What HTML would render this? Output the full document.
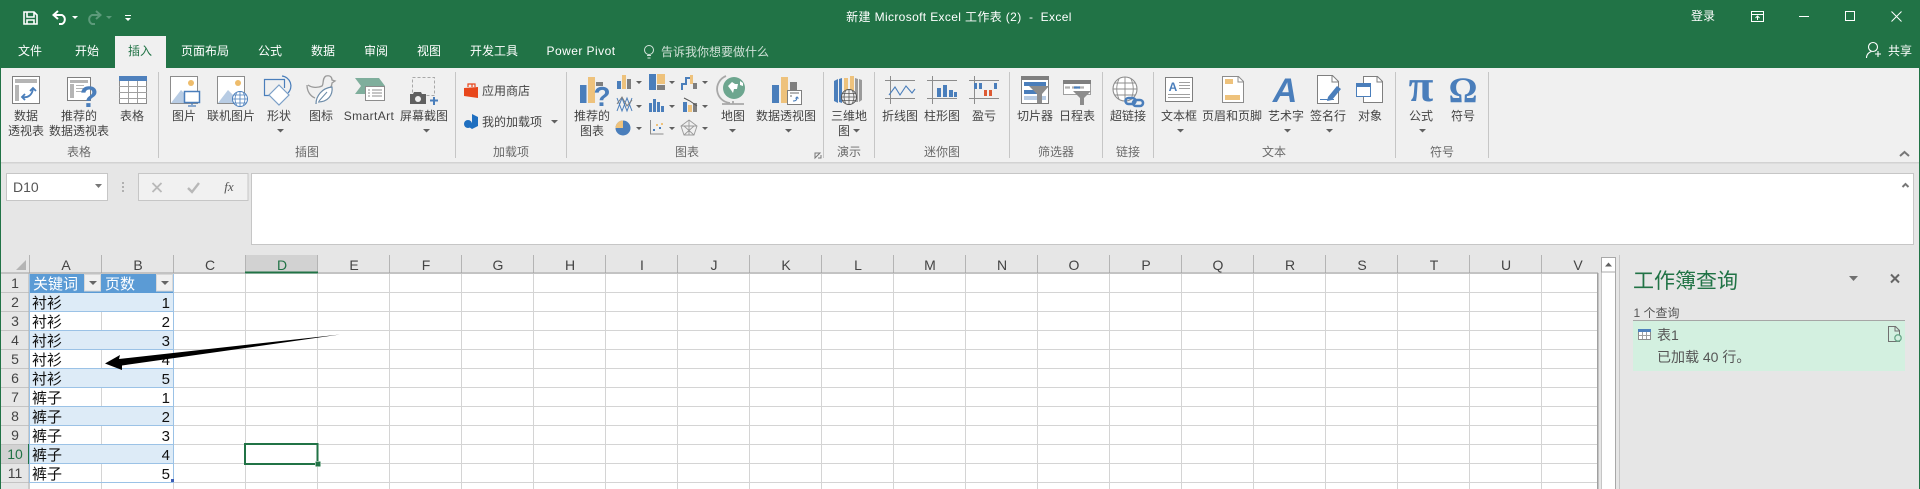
<!DOCTYPE html>
<html lang="zh-CN"><head><meta charset="utf-8"><title>新建 Microsoft Excel 工作表 (2) - Excel</title>
<style>
html,body{margin:0;padding:0;width:1920px;height:489px;overflow:hidden;background:#e6e6e6}
svg{display:block;font-family:"Liberation Sans","Noto Sans CJK SC",sans-serif}
.l{font-size:12px;fill:#444;text-anchor:middle}
.g{font-size:12px;fill:#6a6a6a;text-anchor:middle}
.s{font-size:12px;fill:#444}
.tab{font-size:12px;fill:#fff;text-anchor:middle}
.c{font-size:14px;fill:#444;text-anchor:middle}
.r{font-size:14px;fill:#444;text-anchor:middle}
.k{font-size:15px;fill:#111}
.n{font-size:15px;fill:#111;text-anchor:end}
.sep{stroke:#c6c6c6;stroke-width:1}
.dr{fill:#606060}
</style></head><body>
<svg width="1920" height="489" viewBox="0 0 1920 489" xmlns="http://www.w3.org/2000/svg">
<defs>
<pattern id="grid" x="30" y="274" width="72" height="19" patternUnits="userSpaceOnUse">
<rect x="71" y="0" width="1" height="19" fill="#d4d4d4"/><rect x="0" y="18" width="72" height="1" fill="#d4d4d4"/>
</pattern>
</defs>
<rect width="1920" height="489" fill="#e6e6e6"/>
<!-- title/tab bar -->
<rect width="1920" height="68" fill="#217346"/>
<rect x="0" y="68" width="1" height="421" fill="#217346"/>
<rect x="1919" y="68" width="1" height="421" fill="#217346"/>
<!-- QAT -->
<g fill="none" stroke="#fff" stroke-width="1.6">
<path d="M24 12h10l3 3v9H24z"/><path d="M27 12v5h7v-5" /><path d="M27 24v-4h7v4"/>
<path d="M54 15h8a5 5 0 0 1 0 9h-3" stroke-width="2"/><path d="M58 11l-4.500 4 4.500 4" stroke-width="2"/>
<g stroke="#5c9a7a"><path d="M100 15h-8a5 5 0 0 0 0 9h3" stroke-width="2"/><path d="M96 11l4.500 4-4.500 4" stroke-width="2"/></g>
</g>
<path d="M72 16h6l-3 3z" fill="#fff"/><path d="M106 16h6l-3 3z" fill="#5c9a7a"/>
<path d="M125 15h6v1h-6z M125 18h6l-3 3z" fill="#fff"/>
<text x="959" y="21" fill="#fff" font-size="12" text-anchor="middle" xml:space="preserve" style="letter-spacing:.36px">新建 Microsoft Excel 工作表 (2)  -  Excel</text>
<text class="tab" x="1703" y="20">登录</text>
<g fill="none" stroke="#fff" stroke-width="1">
<path d="M1751.500 11.500h12v10h-12zM1751.500 14.500h12M1757.500 20v-4M1755.500 18l2-2 2 2"/>
<path d="M1799 16.500h10"/><path d="M1845.500 11.500h9v9h-9z"/><path d="M1891.500 11.500l10 10M1901.500 11.500l-10 10"/>
</g>
<!-- tabs -->
<rect x="115" y="36" width="51" height="32" fill="#f0f0f0"/>
<text class="tab" x="30" y="55">文件</text><text class="tab" x="87" y="55">开始</text>
<text class="tab" x="140" y="55" style="fill:#217346">插入</text>
<text class="tab" x="205" y="55">页面布局</text><text class="tab" x="270" y="55">公式</text>
<text class="tab" x="323" y="55">数据</text><text class="tab" x="376" y="55">审阅</text>
<text class="tab" x="429" y="55">视图</text><text class="tab" x="494" y="55">开发工具</text>
<text class="tab" x="581" y="55" style="letter-spacing:.45px">Power Pivot</text>
<g fill="none" stroke="#d5e5dc" stroke-width="1"><circle cx="649" cy="50" r="4.500"/><path d="M647 55.500h4M647.500 58h3"/></g>
<text class="tab" x="715" y="56" style="fill:#cfe0d6">告诉我你想要做什么</text>
<g fill="none" stroke="#fff" stroke-width="1.100"><circle cx="1873" cy="47" r="4.500"/><path d="M1866.500 58c0-4 3-6 5-6.500M1875 54h6M1878 51v6"/></g>
<text class="tab" x="1900" y="55">共享</text>
<!-- ribbon -->
<rect x="1" y="68" width="1918" height="94" fill="#f0f0f0"/>
<rect x="1" y="162" width="1918" height="1.500" fill="#d2d2d2"/>
<g class="sep">
<path d="M158.500 72v86M455.500 72v86M566.500 72v86M823.500 72v86M874.500 72v86M1009.500 72v86M1102.500 72v86M1153.500 72v86M1395.500 72v86M1488.500 72v86"/>
</g>

<!-- ribbon icons: table group -->
<rect x="12.500" y="76.500" width="27" height="27" fill="#fff" stroke="#7f7f7f"/>
<rect x="15" y="79" width="22" height="4" fill="#b5b5b5"/><rect x="15" y="85" width="4" height="16" fill="#b5b5b5"/>
<g fill="none" stroke="#4a7ebb" stroke-width="1.800"><path d="M23 97c5 1 9-2 10-8"/><path d="M30 91l3-3 3 3M25 94l-3 3 3 3"/></g>
<rect x="67.500" y="77.500" width="23" height="23" fill="#fff" stroke="#7f7f7f"/>
<g fill="#b5b5b5"><rect x="70" y="80" width="18" height="3"/><rect x="70" y="84" width="4" height="14"/><rect x="76" y="85" width="8" height="1"/><rect x="76" y="88" width="8" height="1"/><rect x="76" y="91" width="8" height="1"/></g>
<text x="89" y="107" font-size="30" font-weight="bold" fill="#4a7ebb" text-anchor="middle">?</text>
<rect x="119.500" y="76.500" width="27" height="27" fill="#fff" stroke="#8c8c8c"/>
<rect x="119" y="76" width="28" height="5" fill="#4f81bd"/>
<path d="M119 86.500h28M119 92.500h28M119 98.500h28M128.500 81v22M137.500 81v22" stroke="#a0a0a0" fill="none"/>
<!-- illustrations -->
<rect x="170.500" y="76.500" width="27" height="27" fill="#fff" stroke="#8c8c8c"/>
<circle cx="191" cy="83" r="3" fill="#eebc6b"/><path d="M171 103l10-13 6 6 3 7z" fill="#b8cce4"/>
<rect x="184.500" y="91.500" width="15" height="11" fill="#fff" stroke="#4a7ebb" stroke-width="1.500"/><path d="M192 103v2M188 106h8" stroke="#4a7ebb" stroke-width="1.300"/>
<rect x="217.500" y="76.500" width="27" height="27" fill="#fff" stroke="#8c8c8c"/>
<circle cx="238" cy="83" r="3" fill="#eebc6b"/><path d="M218 103l10-13 6 6 3 7z" fill="#b8cce4"/>
<circle cx="240" cy="99" r="7.500" fill="#fff" stroke="#4a7ebb"/><path d="M232.500 99h15M233.500 95h13M233.500 103h13M240 91.500v15M236.500 93c-2 4-2 8 0 12M243.500 93c2 4 2 8 0 12" fill="none" stroke="#4a7ebb" stroke-width=".8"/>
<path d="M282 76a10 10 0 0 1 6 17" fill="none" stroke="#4a7ebb" stroke-width="1.200"/>
<path d="M284.500 88V79.500H264.500V95.500H272" fill="none" stroke="#4a7ebb" stroke-width="1.200"/>
<path d="M279 85l10 10-10 10-10-10z" fill="#fff" stroke="#7b9fc7" stroke-width="1.200"/>
<path d="M308 85c4 3 10 3 14 1 2-2 0-8 4-10 4-1 6 1 6 4l3 1-3 2c0 4-3 6-5 8" fill="none" stroke="#9a9a9a" stroke-width="1.300"/>
<path d="M307 85c0 6 3 11 8 13" fill="none" stroke="#9a9a9a" stroke-width="1.300"/>
<path d="M316 104c0-8 6-16 16-17 1 8-4 15-14 15" fill="#fff" stroke="#6c8ba8" stroke-width="1.200"/><path d="M319 101l8-9" stroke="#6c8ba8"/>
<path d="M355 78h24l6 8-6 8h-24l6-8z" fill="#7fae9c"/>
<rect x="365.500" y="86.500" width="19" height="14" fill="#fff" stroke="#8c8c8c"/><path d="M372 90h10M372 93h10M372 96h10M368 90h2M368 93h2M368 96h2" stroke="#8c8c8c"/>
<rect x="412.500" y="77.500" width="22" height="18" fill="none" stroke="#a8a8a8" stroke-dasharray="3 2"/>
<path d="M410 94h3l1-2h7l1 2h4v10h-16z" fill="#606060"/><circle cx="418" cy="99" r="3" fill="#f0f0f0"/>
<path d="M430 100.500h8M434 97v8" stroke="#4a7ebb" stroke-width="2"/>
<text class="l" x="26" y="120">数据</text><text class="l" x="26" y="135">透视表</text>
<text class="l" x="79" y="120">推荐的</text><text class="l" x="79" y="135">数据透视表</text>
<text class="l" x="132" y="120">表格</text>
<text class="l" x="184" y="120">图片</text><text class="l" x="231" y="120">联机图片</text>
<text class="l" x="279" y="120">形状</text><path class="dr" d="M277 129h7l-3.500 3.500z"/>
<text class="l" x="321" y="120">图标</text><text class="l" x="369" y="120" style="letter-spacing:.4px">SmartArt</text>
<text class="l" x="424" y="120">屏幕截图</text><path class="dr" d="M423 129h7l-3.500 3.500z"/>
<text class="g" x="79" y="156">表格</text><text class="g" x="307" y="156">插图</text>
<!-- add-ins -->
<path d="M464 88l14-1v11l-14-2z" fill="#e8471c"/><path d="M468 87v-3h4v3M472 84h3v3" fill="none" stroke="#e8471c" stroke-width="1.200"/>
<path d="M472 114l6 3v9l-6 3-3-2v-3l3-1z" fill="#1f6fc0"/><circle cx="468" cy="124" r="4" fill="#1f6fc0"/>
<text class="s" x="482" y="95">应用商店</text><text class="s" x="482" y="126">我的加载项</text>
<path class="dr" d="M551 120h7l-3.500 3.500z"/>
<text class="g" x="511" y="156">加载项</text>
<!-- charts -->
<rect x="580" y="85" width="6.500" height="18" fill="#4a7ebb"/><rect x="588" y="77" width="7" height="26" fill="#eec27c"/><rect x="596" y="82" width="7" height="4" fill="#7f7f7f"/>
<text x="602" y="106" font-size="28" font-weight="bold" fill="#4a7ebb" text-anchor="middle">?</text>
<text class="l" x="592" y="120">推荐的</text><text class="l" x="592" y="135">图表</text>
<g>
<rect x="617" y="81" width="4" height="8" fill="#4a7ebb"/><rect x="622" y="75" width="4" height="14" fill="#eec27c"/><rect x="627" y="79" width="4" height="10" fill="#7f7f7f"/>
<rect x="649" y="74" width="7" height="16" fill="#4a7ebb"/><rect x="657" y="74" width="8" height="10" fill="#eec27c"/><rect x="657" y="85" width="8" height="5" fill="#7f7f7f"/>
<path d="M682 90v-6h4v-6h5v5" fill="none" stroke="#4a7ebb" stroke-width="2"/><rect x="690" y="75" width="3" height="9" fill="#eec27c"/><rect x="693" y="83" width="4" height="6" fill="#7f7f7f"/>
<path d="M617 98l5 13 5-13 5 13M617 111l5-13 5 13 5-13" fill="none" stroke="#4a7ebb"/><path d="M617 104l5-7 5 9 5-6" fill="none" stroke="#7f7f7f"/>
<g fill="#4a7ebb"><rect x="649" y="103" width="3" height="9"/><rect x="653" y="99" width="3" height="13"/><rect x="657" y="102" width="3" height="10"/><rect x="661" y="106" width="3" height="6"/></g>
<rect x="683" y="102" width="4" height="10" fill="#4a7ebb"/><rect x="688" y="105" width="4" height="7" fill="#eec27c"/><rect x="693" y="103" width="4" height="9" fill="#7f7f7f"/><path d="M684 98l6 3 7 5" stroke="#555" fill="none"/>
<circle cx="623" cy="128" r="7.500" fill="#4a7ebb"/><path d="M623 128v-7.500a7.500 7.500 0 0 0-7.500 7.500z" fill="#eec27c"/>
<path d="M650.500 120v14h13" fill="none" stroke="#8c8c8c"/><g fill="#4a7ebb"><rect x="653" y="129" width="2" height="2"/><rect x="659" y="127" width="2" height="2"/></g><g fill="#eec27c"><rect x="656" y="124" width="2" height="2"/><rect x="661" y="123" width="2" height="2"/></g>
<path d="M689 120l8 6-3 9h-10l-3-9zM689 120v15M681 126l16 0M684 135l10-9M694 135l-10-9" fill="none" stroke="#9a9a9a" stroke-width=".9"/>
<path class="dr" d="M636 81h6l-3 3zM669 81h6l-3 3zM702 81h6l-3 3zM636 105h6l-3 3zM669 105h6l-3 3zM702 105h6l-3 3zM636 127h6l-3 3zM669 127h6l-3 3zM702 127h6l-3 3z"/>
</g>
<circle cx="734" cy="88" r="11" fill="#6da68f"/><path d="M728 86l4-4 3 2 3 0-1 5-3 0-1 4-2-3z" fill="#fff"/><path d="M740 81l3 2 0 3-3-1z" fill="#fff"/>
<path d="M726 76a14 14 0 0 0 4 27M722 104h22M733 101v3" fill="none" stroke="#a8a8a8" stroke-width="1.800"/>
<text class="l" x="733" y="120">地图</text><path class="dr" d="M729 129h7l-3.500 3.500z"/>
<rect x="772" y="85" width="7" height="18" fill="#4a7ebb"/><rect x="781" y="77" width="7" height="26" fill="#eec27c"/><rect x="790" y="82" width="7" height="8" fill="#7f7f7f"/>
<rect x="787.500" y="90.500" width="14" height="14" fill="#fff" stroke="#7f7f7f"/><path d="M790 93h9M790 96h2" stroke="#b5b5b5" stroke-width="2"/><path d="M793 101c3 0 4-1 4-4M795.500 98.500l1.500-1.500 1.500 1.500" stroke="#4a7ebb" fill="none"/>
<text class="l" x="786" y="120">数据透视图</text><path class="dr" d="M785 129h7l-3.500 3.500z"/>
<path d="M815 153h5l-5 5z M818 158h3v-3" fill="none" stroke="#777"/>
<text class="g" x="687" y="156">图表</text>
<!-- 3D map -->
<path d="M834 81l4-2v24l-4-2z" fill="#4a7ebb"/><path d="M839 79l3-1v25l-3-1z" fill="#4a7ebb"/><path d="M844 78h4v16h-4zM850 76h4v18h-4z" fill="#eec27c"/><path d="M855 78l3 1v23h-3zM859 79l3 1v20l-3 2z" fill="#9a9a9a"/>
<circle cx="849" cy="97" r="7.500" fill="#f0f0f0" stroke="#555"/><path d="M841.500 97h15M842.500 93.500h13M842.500 100.500h13M849 89.500v15M845.500 91c-2 4-2 8 0 12M852.500 91c2 4 2 8 0 12" fill="none" stroke="#555" stroke-width=".8"/>
<text class="l" x="849" y="120">三维地</text><text class="l" x="844" y="135">图</text><path class="dr" d="M853 129h7l-3.500 3.500z"/>
<text class="g" x="849" y="156">演示</text>
<!-- sparklines -->
<g fill="none" stroke="#8c8c8c"><path d="M885 80.500h30M890.500 76v28M885 98.500h30"/><path d="M927 80.500h30M932.500 76v28M927 98.500h30"/><path d="M969 80.500h30M974.500 76v28M969 98.500h30"/></g>
<path d="M889 95l6-8 5 8 6-9 6 7 3-4" fill="none" stroke="#4a7ebb" stroke-width="1.100"/>
<g fill="#4a7ebb"><rect x="937" y="88" width="4" height="9"/><rect x="943" y="85" width="4" height="12"/><rect x="949" y="90" width="4" height="7"/><rect x="954" y="92" width="3" height="5"/></g>
<g><rect x="974" y="83" width="3" height="6" fill="#4a7ebb"/><rect x="979" y="83" width="3" height="6" fill="#4a7ebb"/><rect x="984" y="90" width="3" height="6" fill="#dd5a33"/><rect x="989" y="90" width="3" height="6" fill="#dd5a33"/><rect x="994" y="83" width="3" height="6" fill="#4a7ebb"/></g>
<text class="l" x="900" y="120">折线图</text><text class="l" x="942" y="120">柱形图</text><text class="l" x="984" y="120">盈亏</text>
<text class="g" x="942" y="156">迷你图</text>
<!-- filters -->
<rect x="1021.500" y="76.500" width="27" height="27" fill="#fff" stroke="#7f7f7f"/><rect x="1021" y="76" width="28" height="4" fill="#7f7f7f"/>
<rect x="1024" y="82" width="22" height="4" fill="#4a7ebb"/><rect x="1024" y="90" width="15" height="4" fill="#4a7ebb"/><rect x="1024" y="96" width="22" height="4" fill="#b8cce4"/>
<path d="M1029 86h20l-7 8v9h-5v-9z" fill="#8c8c8c"/>
<rect x="1063.500" y="80.500" width="27" height="14" fill="#fff" stroke="#a0a0a0"/><rect x="1063" y="80" width="28" height="4" fill="#7f7f7f"/>
<path d="M1065 87.500h5M1072 87.500h5M1079 87.500h5" stroke="#b0b0b0" stroke-width="2.200"/><path d="M1074 87.500h6" stroke="#4a7ebb" stroke-width="2.200"/>
<path d="M1073 91h18l-7 7v7h-4v-7z" fill="#8c8c8c"/>
<text class="l" x="1035" y="120">切片器</text><text class="l" x="1077" y="120">日程表</text>
<text class="g" x="1056" y="156">筛选器</text>
<!-- link -->
<circle cx="1125" cy="89" r="12" fill="#fff" stroke="#8c8c8c" stroke-width="1.100"/>
<path d="M1113 89h24M1115 83h20M1115 95h20M1125 77v24M1119 79c-3 6-3 14 0 20M1131 79c3 6 3 14 0 20" fill="none" stroke="#8c8c8c" stroke-width=".9"/>
<g fill="none" stroke="#4a7ebb" stroke-width="2.600"><rect x="1125.500" y="98" width="10" height="6" rx="3"/><rect x="1133" y="100" width="10" height="6" rx="3"/></g>
<text class="l" x="1128" y="120">超链接</text><text class="g" x="1128" y="156">链接</text>
<!-- text -->
<rect x="1165.500" y="77.500" width="27" height="24" fill="#fff" stroke="#7f7f7f"/>
<text x="1173" y="91" font-size="12" font-weight="bold" fill="#4a7ebb" text-anchor="middle">A</text>
<path d="M1179 82.500h11M1179 85.500h11M1179 88.500h11M1168 94.500h22M1168 97.500h22" stroke="#a0a0a0"/>
<path d="M1222.500 76.500h16l5 5v21h-21z" fill="#fff" stroke="#8c8c8c"/><path d="M1238 77v5h5" fill="none" stroke="#8c8c8c"/>
<rect x="1225" y="79" width="8" height="5" fill="#eec27c"/><rect x="1225" y="95" width="15" height="5" fill="#eec27c"/>
<text x="1285" y="102" font-size="34" font-weight="bold" font-style="italic" fill="#4a7ebb" text-anchor="middle">A</text>
<path d="M1317.500 75.500h15l6 6v22h-21z" fill="#fff" stroke="#7f7f7f"/><path d="M1332 76v6h6" fill="none" stroke="#7f7f7f"/>
<path d="M1328 97l9-11 4 3-9 11-5 1z" fill="#4a7ebb"/><path d="M1320 99.500h14" stroke="#4a7ebb"/>
<path d="M1363.500 76.500h14l5 5v21h-19z" fill="#fff" stroke="#7f7f7f"/><path d="M1377 77v5h5" fill="none" stroke="#7f7f7f"/>
<rect x="1356.500" y="83.500" width="14" height="13" fill="#fff" stroke="#4a7ebb"/><rect x="1356" y="83" width="15" height="4" fill="#4a7ebb"/>
<text class="l" x="1179" y="120">文本框</text><path class="dr" d="M1177 129h7l-3.500 3.500z"/>
<text class="l" x="1232" y="120">页眉和页脚</text>
<text class="l" x="1286" y="120">艺术字</text><path class="dr" d="M1284 129h7l-3.500 3.500z"/>
<text class="l" x="1328" y="120">签名行</text><path class="dr" d="M1326 129h7l-3.500 3.500z"/>
<text class="l" x="1370" y="120">对象</text>
<text class="g" x="1274" y="156">文本</text>
<!-- symbols -->
<text x="1421" y="101" font-family="Liberation Serif" font-size="45" font-weight="bold" fill="#4a7ebb" text-anchor="middle">π</text>
<text x="1463" y="102" font-family="Liberation Serif" font-size="36" font-weight="bold" fill="#4a7ebb" text-anchor="middle">Ω</text>
<text class="l" x="1421" y="120">公式</text><path class="dr" d="M1419 129h7l-3.500 3.500z"/>
<text class="l" x="1463" y="120">符号</text><text class="g" x="1442" y="156">符号</text>
<path d="M1900 156l4.500-4 4.500 4" fill="none" stroke="#777" stroke-width="2"/>

<!-- formula bar -->
<rect x="6.500" y="173.500" width="101" height="27" fill="#fff" stroke="#c6c6c6"/>
<text x="13" y="192" font-size="14" fill="#555">D10</text>
<path d="M95 184h7l-3.500 4z" fill="#777"/>
<g fill="#b0b0b0"><rect x="122" y="182" width="2" height="2"/><rect x="122" y="186" width="2" height="2"/><rect x="122" y="190" width="2" height="2"/></g>
<rect x="138.500" y="173.500" width="109.500" height="27" fill="#f1f1f1" stroke="#c6c6c6"/>
<path d="M152.500 183l9 9M161.500 183l-9 9" stroke="#b8b8b8" stroke-width="1.800" fill="none"/>
<path d="M188 188l4 4 7-9" stroke="#b8b8b8" stroke-width="2.400" fill="none"/>
<text x="229" y="191" font-family="Liberation Serif" font-size="13" font-style="italic" fill="#555" text-anchor="middle">fx</text>
<rect x="251.500" y="173.500" width="1662" height="71" fill="#fff" stroke="#c6c6c6"/>
<path d="M1902.500 187l3-3 3 3" fill="none" stroke="#777" stroke-width="2"/>

<!-- headers -->
<rect x="1" y="255" width="1597" height="18" fill="#e6e6e6"/>
<path d="M16 270l10-10v10z" fill="#b4b4b4"/>
<rect x="245" y="255" width="73" height="18" fill="#d2d2d2"/>
<rect x="1" y="444" width="28" height="19" fill="#d2d2d2"/>
<g fill="#b4b4b4">
<rect x="29" y="255" width="1" height="18"/><rect x="101" y="255" width="1" height="18"/><rect x="173" y="255" width="1" height="18"/><rect x="245" y="255" width="1" height="18"/><rect x="317" y="255" width="1" height="18"/><rect x="389" y="255" width="1" height="18"/><rect x="461" y="255" width="1" height="18"/><rect x="533" y="255" width="1" height="18"/><rect x="605" y="255" width="1" height="18"/><rect x="677" y="255" width="1" height="18"/><rect x="749" y="255" width="1" height="18"/><rect x="821" y="255" width="1" height="18"/><rect x="893" y="255" width="1" height="18"/><rect x="965" y="255" width="1" height="18"/><rect x="1037" y="255" width="1" height="18"/><rect x="1109" y="255" width="1" height="18"/><rect x="1181" y="255" width="1" height="18"/><rect x="1253" y="255" width="1" height="18"/><rect x="1325" y="255" width="1" height="18"/><rect x="1397" y="255" width="1" height="18"/><rect x="1469" y="255" width="1" height="18"/><rect x="1541" y="255" width="1" height="18"/>
</g>
<rect x="1" y="272.500" width="1597" height="1" fill="#a0a0a0"/>
<rect x="245" y="271.500" width="73" height="2" fill="#217346"/>
<g>
<text class="c" x="66" y="270">A</text><text class="c" x="138" y="270">B</text><text class="c" x="210" y="270">C</text>
<text class="c" x="282" y="270" style="fill:#217346">D</text>
<text class="c" x="354" y="270">E</text><text class="c" x="426" y="270">F</text><text class="c" x="498" y="270">G</text><text class="c" x="570" y="270">H</text><text class="c" x="642" y="270">I</text><text class="c" x="714" y="270">J</text><text class="c" x="786" y="270">K</text><text class="c" x="858" y="270">L</text><text class="c" x="930" y="270">M</text><text class="c" x="1002" y="270">N</text><text class="c" x="1074" y="270">O</text><text class="c" x="1146" y="270">P</text><text class="c" x="1218" y="270">Q</text><text class="c" x="1290" y="270">R</text><text class="c" x="1362" y="270">S</text><text class="c" x="1434" y="270">T</text><text class="c" x="1506" y="270">U</text><text class="c" x="1578" y="270">V</text>
</g>
<!-- row headers -->
<g fill="#c4c4c4"><rect x="1" y="292" width="28" height="1"/><rect x="1" y="311" width="28" height="1"/><rect x="1" y="330" width="28" height="1"/><rect x="1" y="349" width="28" height="1"/><rect x="1" y="368" width="28" height="1"/><rect x="1" y="387" width="28" height="1"/><rect x="1" y="406" width="28" height="1"/><rect x="1" y="425" width="28" height="1"/><rect x="1" y="444" width="28" height="1"/><rect x="1" y="463" width="28" height="1"/><rect x="1" y="482" width="28" height="1"/></g>
<rect x="28.500" y="273" width="1" height="216" fill="#b0b0b0"/>
<rect x="28" y="444" width="2" height="20" fill="#217346"/>
<text class="r" x="15" y="288">1</text><text class="r" x="15" y="307">2</text><text class="r" x="15" y="326">3</text><text class="r" x="15" y="345">4</text><text class="r" x="15" y="364">5</text><text class="r" x="15" y="383">6</text><text class="r" x="15" y="402">7</text><text class="r" x="15" y="421">8</text><text class="r" x="15" y="440">9</text><text class="r" x="15" y="459" style="fill:#217346">10</text><text class="r" x="15" y="478">11</text>
<!-- cells -->
<rect x="30" y="274" width="1567" height="215" fill="#fff"/>
<rect x="30" y="274" width="1567" height="215" fill="url(#grid)"/>
<!-- table -->
<rect x="30" y="274" width="144" height="19" fill="#5b9bd5"/>
<g fill="#ddebf7"><rect x="30" y="293" width="144" height="18"/><rect x="30" y="331" width="144" height="18"/><rect x="30" y="369" width="144" height="18"/><rect x="30" y="407" width="144" height="18"/><rect x="30" y="445" width="144" height="18"/></g>
<g fill="#9bc2e6"><rect x="30" y="311" width="144" height="1"/><rect x="30" y="330" width="144" height="1"/><rect x="30" y="349" width="144" height="1"/><rect x="30" y="368" width="144" height="1"/><rect x="30" y="387" width="144" height="1"/><rect x="30" y="406" width="144" height="1"/><rect x="30" y="425" width="144" height="1"/><rect x="30" y="444" width="144" height="1"/><rect x="30" y="463" width="144" height="1"/><rect x="30" y="482" width="144" height="1"/><rect x="29" y="274" width="1" height="209"/><rect x="173" y="274" width="1" height="209"/></g>
<rect x="171" y="479" width="3" height="3" fill="#3c5fb5"/>
<g fill="#fff" font-size="15"><text x="33" y="289">关键词</text><text x="105" y="289">页数</text></g>
<g fill="#f0f0f0" stroke="#d8d8d8"><rect x="84.500" y="274.500" width="16" height="16.500"/><rect x="156.500" y="274.500" width="16" height="16.500"/></g>
<path d="M89 281h8l-4 4zM161 281h8l-4 4z" fill="#666"/>
<g class="k"><text class="k" x="32" y="308">衬衫</text><text class="k" x="32" y="327">衬衫</text><text class="k" x="32" y="346">衬衫</text><text class="k" x="32" y="365">衬衫</text><text class="k" x="32" y="384">衬衫</text><text class="k" x="32" y="403">裤子</text><text class="k" x="32" y="422">裤子</text><text class="k" x="32" y="441">裤子</text><text class="k" x="32" y="460">裤子</text><text class="k" x="32" y="479">裤子</text></g>
<text class="n" x="170" y="308">1</text><text class="n" x="170" y="327">2</text><text class="n" x="170" y="346">3</text><text class="n" x="170" y="365">4</text><text class="n" x="170" y="384">5</text><text class="n" x="170" y="403">1</text><text class="n" x="170" y="422">2</text><text class="n" x="170" y="441">3</text><text class="n" x="170" y="460">4</text><text class="n" x="170" y="479">5</text>
<!-- arrow -->
<path d="M105 363.500L120 355L119 359L340 334.500L122 365.500L122 370Z" fill="#000"/>
<!-- selection -->
<rect x="245" y="444" width="72.500" height="20" fill="none" stroke="#217346" stroke-width="2"/>
<rect x="315" y="461" width="6" height="6" fill="#fff"/><rect x="315.500" y="461.500" width="5" height="5" fill="#217346"/>
<!-- sheet edge and scrollbar -->
<rect x="1597" y="273" width="1.500" height="216" fill="#a0a0a0"/>
<rect x="1601" y="257" width="15" height="232" fill="#fff"/>
<rect x="1601" y="257" width="1" height="232" fill="#c6c6c6"/>
<rect x="1615" y="257" width="1" height="232" fill="#a8a8a8"/>
<rect x="1601.500" y="257.500" width="14" height="14.500" fill="#fff" stroke="#a8a8a8"/>
<path d="M1605 266.500h7l-3.500-4z" fill="#606060"/>
<!-- panel -->
<rect x="1619" y="255" width="1" height="234" fill="#c6c6c6"/>
<text x="1633" y="288" font-size="21" fill="#217346">工作簿查询</text>
<path d="M1849 276h9l-4.500 5z" fill="#707070"/>
<path d="M1891 274.500l8 8M1899 274.500l-8 8" stroke="#666" stroke-width="2" fill="none"/>
<text x="1633.500" y="317" font-size="12" fill="#555">1 个查询</text>
<rect x="1633" y="320" width="272" height="1" fill="#a6a6a6"/>
<rect x="1633" y="321" width="272" height="50" fill="#d3f0e0"/>
<rect x="1638.500" y="329.500" width="12" height="10" fill="#fff" stroke="#8c8c8c"/>
<rect x="1638" y="329" width="13" height="3" fill="#4f81bd"/>
<path d="M1642.500 332v7M1646.500 332v7M1639 335.500h11" stroke="#a0a0a0" fill="none"/>
<text x="1657" y="340" font-size="14" fill="#555">表1</text>
<text x="1657" y="362" font-size="14" fill="#555">已加载 40 行。</text>
<path d="M1888.500 326.500h7l4 4v11h-11z" fill="none" stroke="#707070"/><path d="M1895 327v4h4" fill="none" stroke="#707070"/>
<circle cx="1898" cy="338" r="3.200" fill="#d3f0e0" stroke="#6aa88a" stroke-width="1.300"/>
</svg>
</body></html>
